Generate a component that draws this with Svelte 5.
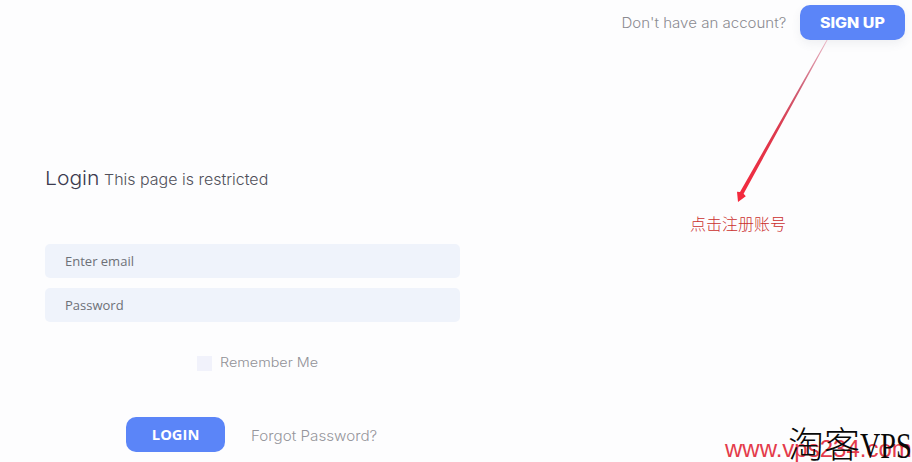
<script>
  let email = $state('');
  let password = $state('');
  let remember = $state(false);
</script>

<main class="page">
  <header>
    <span class="hint">Don't have an account?</span>
    <button class="primary signup"><span>SIGN UP</span></button>
  </header>

  <form onsubmit={(e) => e.preventDefault()}>
    <h1><span class="title">Login</span><span class="sub">This page is restricted</span></h1>
    <input type="text" placeholder="Enter email" bind:value={email} />
    <input type="password" placeholder="Password" bind:value={password} />
    <label class="remember">
      <input type="checkbox" bind:checked={remember} />
      <span>Remember Me</span>
    </label>
    <div class="actions">
      <button class="primary login"><span>LOGIN</span></button>
      <a href="#forgot">Forgot Password?</a>
    </div>
  </form>

  <svg class="arrow" width="110" height="170" viewBox="0 0 110 170" aria-hidden="true">
    <defs>
      <linearGradient id="fade" x1="97" y1="0" x2="8" y2="162" gradientUnits="userSpaceOnUse">
        <stop offset="0" stop-color="#eab8c6" />
        <stop offset="0.3" stop-color="#cf5f75" />
        <stop offset="0.55" stop-color="#dd3a4e" />
        <stop offset="1" stop-color="#f5283c" />
      </linearGradient>
    </defs>
    <path d="M96.6 0L97.6 0L13.6 153.8L15.8 156.2L8 162L7 151.8L10 152Z" fill="url(#fade)" />
  </svg>
  <span class="note">点击注册账号</span>
  <span class="url">www.vps234.com</span>
  <span class="brand">淘客<span class="latin">VPS</span></span>
</main>

<style>
  :global(body) { background: #fdfdfe; }
  .page {
    position: relative;
    box-sizing: border-box;
    width: 912px;
    height: 462px;
    overflow: hidden;
    background: #fdfdfe;
    font-family: Inter, "Open Sans", sans-serif;
  }
  header {
    display: flex;
    justify-content: flex-end;
    align-items: center;
    padding: 5px 7px 0 0;
    height: 35px;
  }
  .hint {
    margin-right: 14px;
    font-size: 14px;
    font-weight: 300;
    transform: scaleX(1.075);
    transform-origin: right;
    color: #8b8b91;
    white-space: nowrap;
  }
  button {
    border: 0;
    padding: 0;
    height: 35px;
    border-radius: 10px;
    background: #5b85f8;
    color: #fff;
    font-weight: 700;
  }
  .signup {
    width: 105px;
    font-family: Inter, sans-serif;
    font-size: 14px;
    font-weight: 800;
    box-shadow: 0 4px 10px rgba(80, 90, 120, 0.08);
  }
  .signup span {
    display: inline-block;
    transform: scaleX(1.14);
  }
  form {
    display: flex;
    flex-direction: column;
    width: 415px;
    margin-left: 45px;
    padding-top: 123px;
  }
  h1 {
    display: flex;
    align-items: baseline;
    height: 32px;
    line-height: 32px;
    margin: 0 0 49px;
    font-weight: 400;
    white-space: nowrap;
  }
  .title {
    width: 59px;
    font-size: 19px;
    font-weight: 350;
    color: #3c3b50;
    transform: scaleX(1.11);
    transform-origin: left;
  }
  .sub {
    font-size: 15px;
    font-weight: 300;
    transform: scaleX(1.065);
    transform-origin: left;
    color: #50505a;
  }
  input[type='text'],
  input[type='password'] {
    box-sizing: border-box;
    width: 415px;
    height: 34px;
    margin: 0 0 10px;
    padding: 0 20px;
    border: 0;
    border-radius: 5px;
    background: #eff3fb;
    font-family: "Open Sans", sans-serif;
    font-size: 13px;
  }
  input::placeholder { color: #6d7077; opacity: 1; }
  .remember {
    display: flex;
    align-items: center;
    height: 16px;
    margin: 23px 0 0 152px;
    font-size: 12.5px;
    font-weight: 300;
    color: #919197;
  }
  .remember span {
    margin-top: -1px;
    transform: scaleX(1.15);
    transform-origin: left;
  }
  .remember input {
    appearance: none;
    width: 15px;
    height: 15px;
    margin: 1px 8px 0 0;
    background: #f1f2fb;
  }
  .actions {
    display: flex;
    align-items: center;
    margin: 46px 0 0 81px;
  }
  .login {
    width: 99px;
    font-family: "Open Sans", sans-serif;
    font-size: 14px;
  }
  .login span {
    display: inline-block;
    transform: scaleX(1.05);
  }
  a {
    margin: 2px 0 0 26px;
    font-size: 14px;
    font-weight: 300;
    transform: scaleX(1.085);
    transform-origin: left;
    color: #95959b;
    text-decoration: none;
  }
  .arrow { position: absolute; left: 730px; top: 40px; }
  .note {
    position: absolute;
    left: 690px;
    top: 211px;
    font: 300 16px/24px "Noto Sans CJK SC", sans-serif;
    color: #cb2f2d;
    white-space: nowrap;
  }
  .url {
    position: absolute;
    left: 725px;
    top: 435px;
    font: 24px/28px "Liberation Sans", sans-serif;
    color: #e43b4b;
    white-space: nowrap;
  }
  .brand {
    position: absolute;
    left: 788px;
    top: 426px;
    font: 300 36px/40px "Liberation Serif", "Noto Sans CJK SC", serif;
    color: #080808;
    white-space: nowrap;
  }
  .latin {
    display: inline-block;
    transform: scaleX(0.78);
    transform-origin: left;
  }
</style>
